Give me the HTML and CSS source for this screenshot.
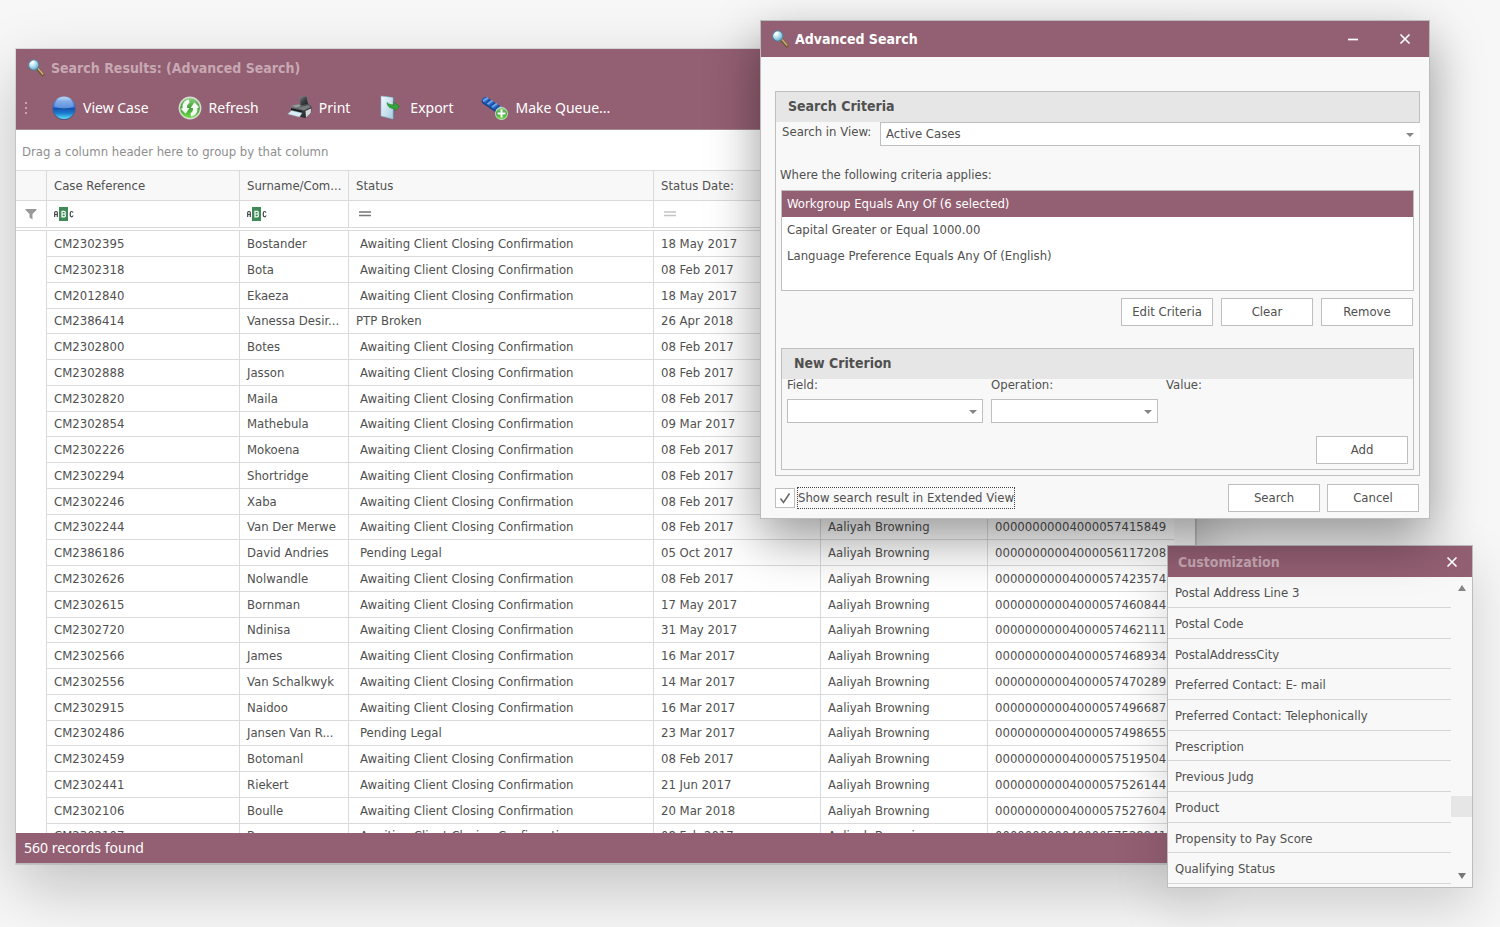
FILE: index.html
```html
<!DOCTYPE html>
<html lang="en">
<head>
<meta charset="utf-8">
<title>Search Results</title>
<link rel="stylesheet" href="styles.css">
</head>
<body>
<svg class="defs" aria-hidden="true">
  <defs>
    <radialGradient id="lens" cx=".35" cy=".3" r=".8"><stop offset="0" stop-color="#fff"/><stop offset=".5" stop-color="#a9dcef"/><stop offset="1" stop-color="#5795b5"/></radialGradient>
    <linearGradient id="ball" x1="0" y1="0" x2="0" y2="1"><stop offset="0" stop-color="#b5d4f7"/><stop offset=".2" stop-color="#5b93e2"/><stop offset=".48" stop-color="#2f6fd6"/><stop offset=".52" stop-color="#1450ad"/><stop offset=".75" stop-color="#1b7ed0"/><stop offset="1" stop-color="#5fe0fb"/></linearGradient>
    <linearGradient id="green" x1="0" y1="0" x2="0" y2="1"><stop offset="0" stop-color="#8fd07f"/><stop offset=".5" stop-color="#3f9f3a"/><stop offset="1" stop-color="#6fe047"/></linearGradient>
    <linearGradient id="steel" x1="0" y1="0" x2="1" y2="1"><stop offset="0" stop-color="#8b8f92"/><stop offset=".5" stop-color="#3b3e41"/><stop offset="1" stop-color="#1d1f21"/></linearGradient>
    <linearGradient id="page" x1="0" y1="0" x2="1" y2="1"><stop offset="0" stop-color="#f2fbff"/><stop offset="1" stop-color="#a9cde0"/></linearGradient>
    <symbol id="magnifier" viewBox="0 0 16 16">
      <path d="M9.5 8.5 14 14" stroke="#6e5630" stroke-width="3" stroke-linecap="round"/>
      <path d="M10 8.6 14 13.4" stroke="#c9ad78" stroke-width="1.4" stroke-linecap="round"/>
      <circle cx="6" cy="5.3" r="4.6" fill="url(#lens)" stroke="#557f97" stroke-width=".9"/>
      <path d="M3.2 4.6C3.7 3 5 2.4 6.5 2.3" stroke="#fff" stroke-width="1.2" fill="none"/>
    </symbol>
    <symbol id="close" viewBox="0 0 12 12"><path d="M1.5 1.5l9 9M10.500 1.500l-9 9" stroke="#fff" stroke-width="1.700" fill="none"/></symbol>
    <symbol id="abc" viewBox="0 0 20 14">
      <rect x="5" y="0" width="9" height="14" fill="#3f8a57"/>
      <path d="M.7 10V5.500Q.7 4.500 1.700 4.500H2.300Q3.300 4.500 3.300 5.500V10M.7 7.500H3.300M19 5.700Q18.800 4.500 17.700 4.500 16.300 4.500 16.300 6V8.300Q16.300 9.800 17.700 9.800 18.800 9.800 19 8.500" fill="none" stroke="#444" stroke-width="1.200"/>
      <path d="M8 4.300H10.300Q11.300 4.300 11.300 5.600T10.300 7H8.200H10.300Q11.400 7 11.400 8.400T10.300 9.800H8Z" fill="none" stroke="#fff" stroke-width="1.200"/>
    </symbol>
  </defs>
</svg>

<main class="desktop">
<section class="window results" aria-label="Search Results">
  <header class="title-bar inactive">
    <svg class="title-icon"><use href="#magnifier"/></svg>
    <h1>Search Results: (Advanced Search)</h1>
  </header>
  <div class="toolbar" role="toolbar">
    <svg class="grip" viewBox="0 0 4 14"><path d="M1 1h2v2H1zM1 6h2v2H1zM1 11h2v2H1z" fill="#c4a5ae"/></svg>
    <button type="button" class="tool view"><svg viewBox="0 0 26 26"><circle cx="13" cy="13.500" r="11.500" fill="#35507c" opacity=".7"/><circle cx="13" cy="12.800" r="11.200" fill="url(#ball)"/><path d="M3.500 11.500C4 5.500 8 2.600 13 2.600s9 2.900 9.500 8.900C17 14 9 14 3.500 11.500Z" fill="#fff" opacity=".25"/></svg>View Case</button>
    <button type="button" class="tool refresh"><svg viewBox="0 0 26 26"><circle cx="13" cy="13" r="11.400" fill="#d5ddd4"/><circle cx="13" cy="13" r="9.900" fill="url(#green)"/><path d="M12 4.500C7.500 5 5 9 5.600 13L3.800 13.700 8.600 18.800 12.400 12.900 10.100 13C9.700 10.600 10.500 8.900 12.500 8ZM14 21.500C18.500 21 21 17 20.400 13L22.200 12.300 17.400 7.200 13.600 13.100 15.900 13C16.300 15.400 15.500 17.100 13.500 18Z" fill="#f4faf2"/></svg>Refresh</button>
    <button type="button" class="tool print"><svg viewBox="0 0 26 26"><path d="M12 2.500 19.500 1 21.500 9.500 13.500 11Z" fill="url(#steel)" stroke="#777b7e" stroke-width=".5"/><path d="M4.500 10.500 12 8.500 14 10.500 21 9 24.500 11.500 24 18 18.500 23 13 22 3.500 16.500Z" fill="url(#steel)"/><path d="M5.500 10.800 12 9.300 14 11 9 12.700Z" fill="#9a9ea1"/><path d="M9 13 21.500 10 24 12 17 15.500Z" fill="#777b7e"/><path d="M4 13 15 16V19L4 16Z" fill="#16181a"/><path d="M.8 19 4.500 15.500 15 18 12.500 22Z" fill="#d8edf5" stroke="#9fb9c4" stroke-width=".5"/><path d="M18.500 16 24 13.500 23.800 18 19 22.500Z" fill="#d5d9db"/></svg>Print</button>
    <button type="button" class="tool export"><svg viewBox="0 0 26 26"><path d="M4 1.500 16.500 2V20.500L15.500 24.500 4 21.500Z" fill="#5e7d93" opacity=".6"/><path d="M3 1 15 2.500V24L3 21Z" fill="url(#page)" stroke="#88b3cb" stroke-width=".6"/><path d="M9 7.500C11 9.800 13.500 9.900 16 9.600L15.500 7 21.500 11.500 17 16 16.500 13.500C12.500 13.800 9.500 12 9 7.500Z" fill="#36a33a" stroke="#20762a" stroke-width=".5"/></svg>Export</button>
    <button type="button" class="tool queue"><svg viewBox="0 0 28 26"><path d="M4.500 6 21.500 17.500" stroke="#1b4488" stroke-width="7.500" stroke-linecap="round"/><path d="M4.500 5.200 21.500 16.500" stroke="#2d6bc9" stroke-width="5.500" stroke-linecap="round"/><path d="M2 6 7 2.800M6.500 9 11.500 5.500M11 12 16 8.500M15.500 15 20.500 11.500" stroke="#6da9ee" stroke-width="1.700"/><path d="M4.500 8.500 9.500 4.500M9 11.500 14 7.500M13.500 14.500 18.500 10.500" stroke="#1b4793" stroke-width="1.200"/><circle cx="20.500" cy="18.500" r="6.500" fill="#c2dfbd"/><circle cx="20.500" cy="18.500" r="5.500" fill="url(#green)"/><path d="M20.500 14.500v8M16.500 18.500h8" stroke="#fff" stroke-width="2"/></svg>Make Queue...</button>
  </div>
  <p class="group-hint">Drag a column header here to group by that column</p>
  <div class="grid-area">
    <table class="grid">
      <colgroup><col class="c-mark"><col class="c-ref"><col class="c-name"><col class="c-status"><col class="c-date"><col class="c-agent"><col></colgroup>
      <thead>
        <tr class="heads"><th></th><th>Case Reference</th><th>Surname/Com...</th><th>Status</th><th>Status Date:</th><th></th><th></th></tr>
        <tr class="filters">
          <td class="funnel"><svg viewBox="0 0 12 12"><path d="M.5 1h11v1L7.500 6v5.500L4.500 9.500V6L.5 2Z" fill="#999"/></svg></td>
          <td><svg class="abc"><use href="#abc"/></svg></td><td><svg class="abc"><use href="#abc"/></svg></td>
          <td><svg class="eq" viewBox="0 0 12 6"><path d="M0 1h12M0 4.500h12" stroke="#777" stroke-width="1.300"/></svg></td>
          <td><svg class="eq" viewBox="0 0 12 6"><path d="M0 1h12M0 4.500h12" stroke="#c4c4c4" stroke-width="1.300"/></svg></td><td></td><td></td>
        </tr>
        <tr class="divider"><td colspan="7"></td></tr>
      </thead>
      <tbody>
        <tr><td></td><td>CM2302395</td><td>Bostander</td><td class="in">Awaiting Client Closing Confirmation</td><td>18 May 2017</td><td></td><td></td></tr>
        <tr><td></td><td>CM2302318</td><td>Bota</td><td class="in">Awaiting Client Closing Confirmation</td><td>08 Feb 2017</td><td></td><td></td></tr>
        <tr><td></td><td>CM2012840</td><td>Ekaeza</td><td class="in">Awaiting Client Closing Confirmation</td><td>18 May 2017</td><td></td><td></td></tr>
        <tr><td></td><td>CM2386414</td><td>Vanessa Desir...</td><td>PTP Broken</td><td>26 Apr 2018</td><td></td><td></td></tr>
        <tr><td></td><td>CM2302800</td><td>Botes</td><td class="in">Awaiting Client Closing Confirmation</td><td>08 Feb 2017</td><td></td><td></td></tr>
        <tr><td></td><td>CM2302888</td><td>Jasson</td><td class="in">Awaiting Client Closing Confirmation</td><td>08 Feb 2017</td><td></td><td></td></tr>
        <tr><td></td><td>CM2302820</td><td>Maila</td><td class="in">Awaiting Client Closing Confirmation</td><td>08 Feb 2017</td><td></td><td></td></tr>
        <tr><td></td><td>CM2302854</td><td>Mathebula</td><td class="in">Awaiting Client Closing Confirmation</td><td>09 Mar 2017</td><td></td><td></td></tr>
        <tr><td></td><td>CM2302226</td><td>Mokoena</td><td class="in">Awaiting Client Closing Confirmation</td><td>08 Feb 2017</td><td></td><td></td></tr>
        <tr><td></td><td>CM2302294</td><td>Shortridge</td><td class="in">Awaiting Client Closing Confirmation</td><td>08 Feb 2017</td><td></td><td></td></tr>
        <tr><td></td><td>CM2302246</td><td>Xaba</td><td class="in">Awaiting Client Closing Confirmation</td><td>08 Feb 2017</td><td></td><td></td></tr>
        <tr><td></td><td>CM2302244</td><td>Van Der Merwe</td><td class="in">Awaiting Client Closing Confirmation</td><td>08 Feb 2017</td><td>Aaliyah Browning</td><td>00000000004000057415849</td></tr>
        <tr><td></td><td>CM2386186</td><td>David Andries</td><td class="in">Pending Legal</td><td>05 Oct 2017</td><td>Aaliyah Browning</td><td>00000000004000056117208</td></tr>
        <tr><td></td><td>CM2302626</td><td>Nolwandle</td><td class="in">Awaiting Client Closing Confirmation</td><td>08 Feb 2017</td><td>Aaliyah Browning</td><td>00000000004000057423574</td></tr>
        <tr><td></td><td>CM2302615</td><td>Bornman</td><td class="in">Awaiting Client Closing Confirmation</td><td>17 May 2017</td><td>Aaliyah Browning</td><td>00000000004000057460844</td></tr>
        <tr><td></td><td>CM2302720</td><td>Ndinisa</td><td class="in">Awaiting Client Closing Confirmation</td><td>31 May 2017</td><td>Aaliyah Browning</td><td>00000000004000057462111</td></tr>
        <tr><td></td><td>CM2302566</td><td>James</td><td class="in">Awaiting Client Closing Confirmation</td><td>16 Mar 2017</td><td>Aaliyah Browning</td><td>00000000004000057468934</td></tr>
        <tr><td></td><td>CM2302556</td><td>Van Schalkwyk</td><td class="in">Awaiting Client Closing Confirmation</td><td>14 Mar 2017</td><td>Aaliyah Browning</td><td>00000000004000057470289</td></tr>
        <tr><td></td><td>CM2302915</td><td>Naidoo</td><td class="in">Awaiting Client Closing Confirmation</td><td>16 Mar 2017</td><td>Aaliyah Browning</td><td>00000000004000057496687</td></tr>
        <tr><td></td><td>CM2302486</td><td>Jansen Van R...</td><td class="in">Pending Legal</td><td>23 Mar 2017</td><td>Aaliyah Browning</td><td>00000000004000057498655</td></tr>
        <tr><td></td><td>CM2302459</td><td>Botomanl</td><td class="in">Awaiting Client Closing Confirmation</td><td>08 Feb 2017</td><td>Aaliyah Browning</td><td>00000000004000057519504</td></tr>
        <tr><td></td><td>CM2302441</td><td>Riekert</td><td class="in">Awaiting Client Closing Confirmation</td><td>21 Jun 2017</td><td>Aaliyah Browning</td><td>00000000004000057526144</td></tr>
        <tr><td></td><td>CM2302106</td><td>Boulle</td><td class="in">Awaiting Client Closing Confirmation</td><td>20 Mar 2018</td><td>Aaliyah Browning</td><td>00000000004000057527604</td></tr>
        <tr><td></td><td>CM2302107</td><td>Bruce</td><td class="in">Awaiting Client Closing Confirmation</td><td>08 Feb 2017</td><td>Aaliyah Browning</td><td>00000000004000057528941</td></tr>
      </tbody>
    </table>
    <div class="gutter"></div>
  </div>
  <footer class="status-bar">560 records found</footer>
</section>

<section class="window customization" aria-label="Customization">
  <header class="title-bar inactive">
    <h2>Customization</h2>
    <button type="button" class="win-btn" aria-label="Close"><svg><use href="#close"/></svg></button>
  </header>
  <div class="field-panel">
    <ul class="fields">
      <li>Postal Address Line 3</li><li>Postal Code</li><li>PostalAddressCity</li><li>Preferred Contact: E- mail</li><li>Preferred Contact: Telephonically</li><li>Prescription</li><li>Previous Judg</li><li>Product</li><li>Propensity to Pay Score</li><li>Qualifying Status</li>
    </ul>
    <div class="scroll-track">
      <button type="button" aria-label="Scroll up"><svg viewBox="0 0 10 8"><path d="M5 1 9 7H1Z" fill="#858585"/></svg></button>
      <div class="thumb"></div>
      <button type="button" aria-label="Scroll down"><svg viewBox="0 0 10 8"><path d="M5 7 1 1H9Z" fill="#777"/></svg></button>
    </div>
  </div>
</section>

<section class="window dialog" role="dialog" aria-label="Advanced Search">
  <header class="title-bar">
    <svg class="title-icon"><use href="#magnifier"/></svg>
    <h2>Advanced Search</h2>
    <button type="button" class="win-btn" aria-label="Minimize"><svg viewBox="0 0 12 12"><path d="M1 6.500h10" stroke="#fff" stroke-width="1.700"/></svg></button>
    <button type="button" class="win-btn" aria-label="Close"><svg><use href="#close"/></svg></button>
  </header>
  <form class="dialog-body">
    <div class="panel criteria">
      <h3>Search Criteria</h3>
      <div class="view-row">
        <label for="view">Search in View:</label>
        <span class="combo"><select id="view"><option>Active Cases</option></select></span>
      </div>
      <p class="where" id="where">Where the following criteria applies:</p>
      <ul class="criteria-list" role="listbox" aria-labelledby="where">
        <li role="option" aria-selected="true">Workgroup Equals Any Of (6 selected)</li>
        <li role="option">Capital Greater or Equal 1000.00</li>
        <li role="option">Language Preference Equals Any Of (English)</li>
      </ul>
      <div class="actions">
        <button type="button" class="btn">Edit Criteria</button><button type="button" class="btn">Clear</button><button type="button" class="btn">Remove</button>
      </div>
      <div class="panel criterion">
        <h3>New Criterion</h3>
        <div class="inputs">
          <div class="field"><label for="field">Field:</label><span class="combo"><select id="field"><option></option></select></span></div>
          <div class="field"><label for="operation">Operation:</label><span class="combo"><select id="operation"><option></option></select></span></div>
          <div class="field"><span>Value:</span></div>
        </div>
        <div class="add-row"><button type="button" class="btn">Add</button></div>
      </div>
    </div>
    <div class="bottom">
      <span class="check"><input type="checkbox" id="extended" checked><svg viewBox="0 0 12 12"><path d="M1.500 6.500 4.500 10.500 10.500 1.500" fill="none" stroke="#666" stroke-width="1.500"/></svg></span>
      <label for="extended" class="focus">Show search result in Extended View</label>
      <button type="button" class="btn">Search</button><button type="button" class="btn">Cancel</button>
    </div>
  </form>
</section>
</main>
</body>
</html>
```
FILE: styles.css
```css
* { box-sizing: border-box; }
body {
  margin: 0;
  background: #f7f7f7;
  color: #505050;
  font: 13px/16px "DejaVu Sans Condensed", "DejaVu Sans", sans-serif;
}
h1, h2, h3, p, ul { margin: 0; padding: 0; font-size: 14px; font-weight: bold; }
p, ul { font-size: 13px; font-weight: normal; list-style: none; }
button, select { font: inherit; color: inherit; margin: 0; }
svg { display: block; flex: none; }
.defs { position: absolute; width: 0; height: 0; }

/* Windows */
.desktop { position: relative; height: 100vh; overflow: hidden; }
.window { position: absolute; display: flex; flex-direction: column; border: 1px solid #bcbcbc; }
.results { left: 16px; right: 304px; top: 49px; bottom: 63px; background: #fff; border-width: 0 1px 1px 0; box-shadow: 0 0 0 1px rgba(0, 0, 0, .1), 0 24px 60px rgba(0, 0, 0, .22); }
.customization { right: 27px; top: 545px; width: 306px; background: #f8f8f8; box-shadow: 0 20px 50px rgba(0, 0, 0, .16); }
.dialog { right: 70px; top: 20px; width: 670px; background: #f8f8f8; box-shadow: 0 20px 48px rgba(0, 0, 0, .4); }
.title-bar { display: flex; align-items: center; height: 36px; padding: 0 8px 0 10px; background: #935f72; color: #fff; }
.title-bar.inactive { color: #c7a9b3; }
.title-icon { width: 18px; height: 18px; margin-right: 6px; }
.title-bar h1, .title-bar h2 { flex: 1; }
.win-btn { display: grid; place-items: center; width: 32px; height: 28px; margin-left: 20px; padding: 0; border: 0; background: none; }
.win-btn svg { width: 12px; height: 12px; }

/* Results window */
.results .title-bar { height: 37px; padding-left: 11px; }
.toolbar { display: flex; align-items: center; height: 44px; padding: 0 8px; background: #935f72; border-bottom: 1px solid #a38a93; }
.grip { width: 4px; height: 14px; }
.tool { display: flex; align-items: center; gap: 6px; padding: 0; margin-left: 28px; border: 0; background: none; color: #fff; font: 14px/20px "Noto Sans", sans-serif; }
.tool svg { width: 26px; height: 26px; }
.tool.view { margin-left: 23px; }
.tool.queue svg { width: 28px; }
.group-hint { height: 40px; padding: 14px 6px 10px; color: #8e8e8e; }
.grid-area { flex: 1; display: flex; min-height: 0; overflow: hidden; border-top: 1px solid #dcdcdc; }
.grid { flex: 1; width: 0; table-layout: fixed; border-collapse: separate; border-spacing: 0; align-self: flex-start; }
.gutter { width: 21px; background: #f8f8f8; }
.c-mark { width: 31px; } .c-ref { width: 193px; } .c-name { width: 109px; } .c-status { width: 305px; } .c-date, .c-agent { width: 167px; }
.grid th, .grid td { height: 26px; padding: 0 3px 0 7px; border-right: 1px solid #dadada; border-bottom: 1px solid #dadada; text-align: left; font-weight: normal; white-space: nowrap; }
.grid th:last-child, .grid td:last-child { border-right: 0; }
.grid tbody tr:nth-child(4n) td { height: 25px; }
.grid tbody td:first-child { border-bottom: 0; }
.grid tbody td.in { padding-left: 11px; }
.grid .heads th { height: 30px; background: #f8f8f8; }
.grid .filters td { height: 27px; }
.grid .filters td.funnel { padding: 0 9px; }
.grid .divider td { height: 3px; padding: 0; }
.funnel svg { width: 12px; height: 12px; }
.abc { width: 20px; height: 14px; }
.eq { width: 12px; height: 6px; margin-left: 3px; }
.status-bar { position: relative; height: 30px; padding: 5px 8px; background: #935f72; color: #fff; font: 14px/20px "Noto Sans", sans-serif; }

/* Customization window */
.customization .title-bar { height: 31px; }
.customization .win-btn { width: 24px; }
.field-panel { display: flex; }
.fields { flex: 1; padding-bottom: 3px; }
.fields li { height: 31px; padding: 8px 7px 6px; border-bottom: 1px solid #d6d6d6; }
.fields li:nth-child(3n) { height: 30px; }
.scroll-track { display: flex; flex-direction: column; align-items: center; justify-content: space-between; width: 21px; padding: 3px 0; }
.scroll-track button { padding: 4px; border: 0; background: none; }
.scroll-track svg { width: 10px; height: 8px; }
.thumb { width: 21px; height: 21px; margin: auto 0 51px; background: #e6e6e6; }

/* Dialog */
.dialog-body { padding: 34px 9px 6px 14px; }
.panel { border: 1px solid #bfbfbf; }
.panel h3 { height: 30px; padding: 6px 12px 8px; background: #e6e6e6; line-height: 16px; }
.criteria { padding-bottom: 5px; }
.view-row { display: flex; }
.view-row label { width: 104px; padding: 2px 6px; }
.view-row .combo { flex: 1; margin-right: -1px; }
.combo { position: relative; display: block; }
.combo select { display: block; width: 100%; height: 24px; padding: 0 5px; border: 1px solid #bfbfbf; border-radius: 0; background: #fff; appearance: none; }
.view-row .combo select { border-right: 0; }
.combo::after { content: ""; position: absolute; right: 6px; top: 11px; border: 4px solid transparent; border-top-color: #858585; border-bottom: 0; pointer-events: none; }
.where { padding: 21px 4px 7px; }
.criteria-list { height: 101px; margin: 0 5px; border: 1px solid #bfbfbf; background: #fff; }
.criteria-list li { height: 26px; padding: 5px; }
.criteria-list li[aria-selected="true"] { background: #935f72; color: #fff; }
.actions { display: flex; justify-content: flex-end; gap: 8px; padding: 7px 6px 22px; }
.btn { width: 92px; height: 28px; padding: 0; border: 1px solid #bfbfbf; background: #fff; }
.criterion { margin: 0 5px; }
.inputs { display: flex; gap: 8px; padding: 0 5px; }
.field { display: flex; flex-direction: column; gap: 8px; }
.field label, .field span { line-height: 12px; }
.field .combo { width: 196px; }
.field:nth-child(2) .combo { width: 167px; }
.add-row { display: flex; justify-content: flex-end; padding: 13px 5px 5px; }
.bottom { display: flex; align-items: center; gap: 7px; padding: 8px 1px 0 0; }
.check { position: relative; width: 20px; height: 20px; margin-right: -5px; }
.check input { display: block; width: 20px; height: 20px; margin: 0; border: 1px solid #bfbfbf; background: #fff; appearance: none; }
.check svg { position: absolute; left: 4px; top: 4px; width: 12px; height: 12px; pointer-events: none; }
.focus { margin-right: auto; padding: 2px 0; border: 1px dotted #444; }
```
